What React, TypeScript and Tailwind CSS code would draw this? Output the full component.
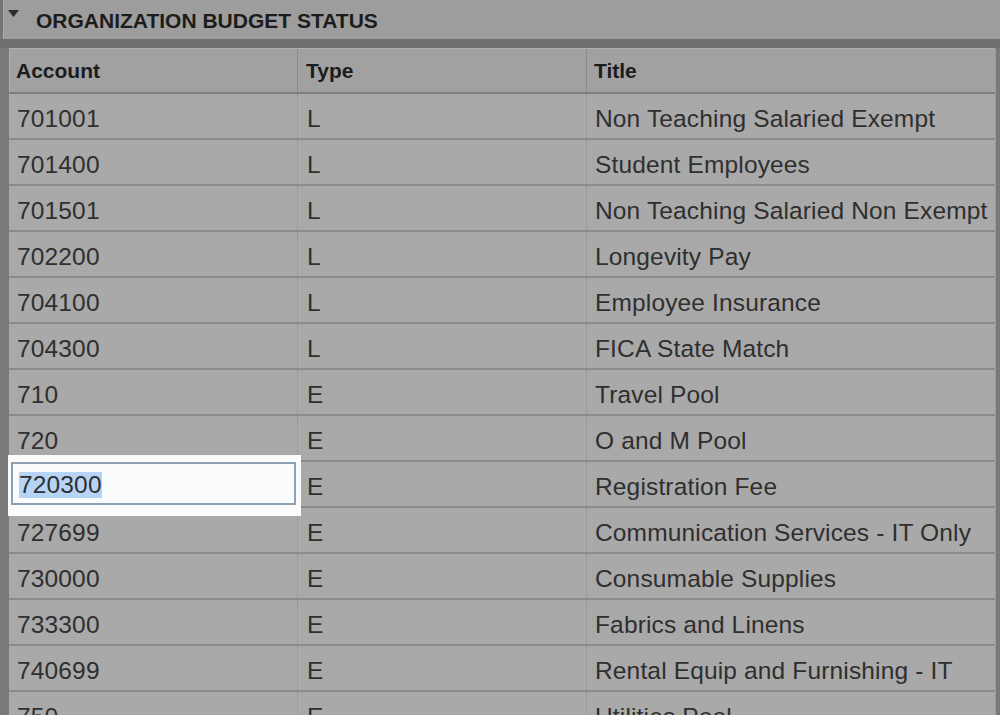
const rows = [
  ["701001", "L", "Non Teaching Salaried Exempt"],
  ["701400", "L", "Student Employees"],
  ["701501", "L", "Non Teaching Salaried Non Exempt"],
  ["702200", "L", "Longevity Pay"],
  ["704100", "L", "Employee Insurance"],
  ["704300", "L", "FICA State Match"],
  ["710", "E", "Travel Pool"],
  ["720", "E", "O and M Pool"],
  ["720300", "E", "Registration Fee"],
  ["727699", "E", "Communication Services - IT Only"],
  ["730000", "E", "Consumable Supplies"],
  ["733300", "E", "Fabrics and Linens"],
  ["740699", "E", "Rental Equip and Furnishing - IT"],
  ["750", "E", "Utilities Pool"],
];

const App = () => {
  return (
    <div
      className="w-[1000px] h-[715px] overflow-hidden bg-[#767676] flex flex-col"
      style={{ fontFamily: '"Liberation Sans", Arial, sans-serif' }}
    >
      {/* section header */}
      <div className="h-[39px] shrink-0 ml-[3px] bg-[#9d9d9d] border-l border-[#a9a9a9] flex items-center">
        <svg width="11" height="7" viewBox="0 0 11 7" className="ml-[4px] mb-[12px]">
          <path d="M0 0 L11 0 L5.5 7 Z" fill="#2e2e2e" />
        </svg>
        <span className="ml-[17px] pt-[3px] text-[21px] font-bold text-[#1c1c1c]">
          ORGANIZATION BUDGET STATUS
        </span>
      </div>
      <div className="h-[9px] shrink-0 bg-[#6f6f6f]" />

      <div className="flex-1 pl-[9px] bg-[#7a7a7a] overflow-hidden">
        <div className="bg-[#a9a9a9] border-r border-dotted border-[#8c8c8c] w-[987px]">
          {/* column headers */}
          <div className="flex h-[46px] bg-[#a1a1a1] border-t border-[#b0b0b0] border-b-2 border-b-[#7f7f7f] text-[21px] font-bold text-[#1c1c1c]">
            <div className="w-[289px] shrink-0 border-l border-[#b0b0b0] border-r border-r-[#8a8a8a] flex items-center pl-[6px]">
              Account
            </div>
            <div className="w-[289px] shrink-0 border-r border-[#8a8a8a] flex items-center pl-[8px]">
              Type
            </div>
            <div className="flex-1 flex items-center pl-[7px]">Title</div>
          </div>

          {rows.map(([account, type, title]) => (
            <div
              key={account}
              className="flex h-[46px] border-b-2 border-[#8b8b8b] text-[24.5px] tracking-[0.15px] text-[#2f2f2f]"
            >
              <div className="relative w-[289px] shrink-0 border-r border-dotted border-[#8e8e8e] flex items-center pl-[8px] pt-[6px]">
                {account === "720300" ? (
                  <div className="absolute z-10 left-[-1px] top-[-7px] w-[293px] h-[61px] bg-[#fbfbfb] p-[3px] pt-[7px]">
                    <div className="h-[43px] w-[285px] bg-[#fafbfd] border-2 border-[#8ea0b4] flex items-center pl-[6px] pt-[3px]">
                      <span className="bg-[#b6d4f5] leading-[26px]">720300</span>
                    </div>
                  </div>
                ) : (
                  account
                )}
              </div>
              <div className="w-[289px] shrink-0 border-r border-dotted border-[#8e8e8e] flex items-center pl-[9px] pt-[6px]">
                {type}
              </div>
              <div className="flex-1 flex items-center pl-[8px] pt-[6px] whitespace-nowrap">{title}</div>
            </div>
          ))}
        </div>
      </div>
    </div>
  );
};

export default App;
